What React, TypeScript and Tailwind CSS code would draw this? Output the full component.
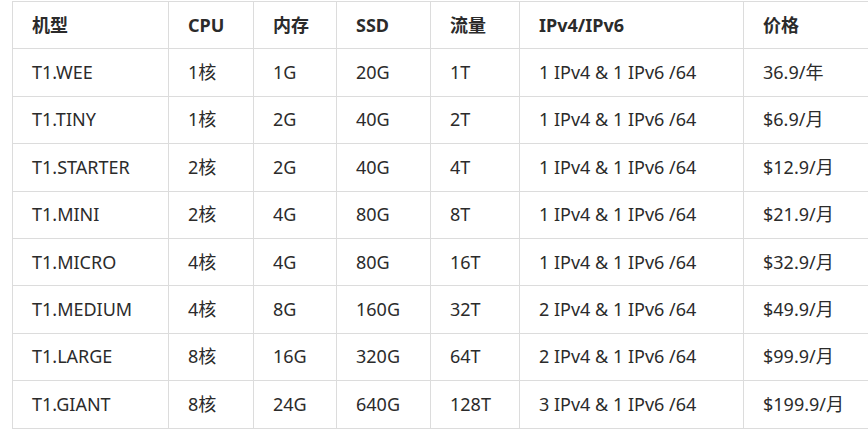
const rows = [
  ["T1.WEE", "1核", "1G", "20G", "1T", "1 IPv4 & 1 IPv6 /64", "36.9/年"],
  ["T1.TINY", "1核", "2G", "40G", "2T", "1 IPv4 & 1 IPv6 /64", "$6.9/月"],
  ["T1.STARTER", "2核", "2G", "40G", "4T", "1 IPv4 & 1 IPv6 /64", "$12.9/月"],
  ["T1.MINI", "2核", "4G", "80G", "8T", "1 IPv4 & 1 IPv6 /64", "$21.9/月"],
  ["T1.MICRO", "4核", "4G", "80G", "16T", "1 IPv4 & 1 IPv6 /64", "$32.9/月"],
  ["T1.MEDIUM", "4核", "8G", "160G", "32T", "2 IPv4 & 1 IPv6 /64", "$49.9/月"],
  ["T1.LARGE", "8核", "16G", "320G", "64T", "2 IPv4 & 1 IPv6 /64", "$99.9/月"],
  ["T1.GIANT", "8核", "24G", "640G", "128T", "3 IPv4 & 1 IPv6 /64", "$199.9/月"],
]

const headers = ["机型", "CPU", "内存", "SSD", "流量", "IPv4/IPv6", "价格"]
const widths = [156, 85, 83, 94, 89, 224, 140]

export default function App() {
  return (
    <div className="min-h-screen bg-white overflow-hidden pl-3 pt-px">
      <table
        className="table-fixed border-collapse text-[18px] text-[#2b2b2b]"
        style={{ width: widths.reduce((a, b) => a + b, 0), fontFamily: '"Noto Sans", "Noto Sans CJK SC", sans-serif' }}
      >
        <colgroup>
          {widths.map((w, i) => (
            <col key={i} style={{ width: w }} />
          ))}
        </colgroup>
        <thead>
          <tr>
            {headers.map((h) => (
              <th key={h} className="h-[47.4px] border border-[#dcdcdc] px-[19px] text-left font-bold">
                {h}
              </th>
            ))}
          </tr>
        </thead>
        <tbody>
          {rows.map((r) => (
            <tr key={r[0]}>
              {r.map((c, i) => (
                <td key={i} className="h-[47.4px] border border-[#dcdcdc] px-[19px] whitespace-nowrap">
                  {c}
                </td>
              ))}
            </tr>
          ))}
        </tbody>
      </table>
    </div>
  )
}
